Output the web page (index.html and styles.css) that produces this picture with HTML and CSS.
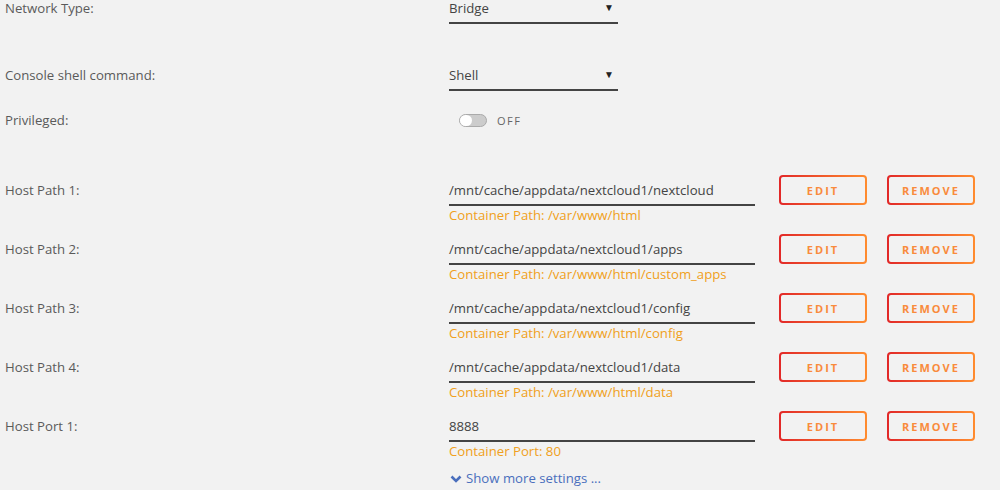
FILE: index.html
```html
<!DOCTYPE html>
<html lang="en">
<head>
    <meta charset="UTF-8">
    <title>Container Settings</title>
    <link rel="stylesheet" href="styles.css">
</head>
<body>

    <div class="settings">
        <div class="row row-network">
            <div class="label">Network Type:</div>
            <div class="field select">Bridge<span class="arrow">&#9660;</span></div>
        </div>

        <div class="row row-shell">
            <div class="label">Console shell command:</div>
            <div class="field select">Shell<span class="arrow">&#9660;</span></div>
        </div>

        <div class="row row-priv">
            <div class="label">Privileged:</div>
            <div class="switch-wrap">
                <span class="switch"><span class="knob"></span></span>
                <span class="switch-text">OFF</span>
            </div>
        </div>

        <div class="row path-row">
            <div class="label">Host Path 1:</div>
            <div class="value">
                <div class="field input">/mnt/cache/appdata/nextcloud1/nextcloud</div>
                <div class="hint">Container Path: /var/www/html</div>
            </div>
            <button class="btn btn-edit">EDIT</button>
            <button class="btn">REMOVE</button>
        </div>

        <div class="row path-row">
            <div class="label">Host Path 2:</div>
            <div class="value">
                <div class="field input">/mnt/cache/appdata/nextcloud1/apps</div>
                <div class="hint">Container Path: /var/www/html/custom_apps</div>
            </div>
            <button class="btn btn-edit">EDIT</button>
            <button class="btn">REMOVE</button>
        </div>

        <div class="row path-row">
            <div class="label">Host Path 3:</div>
            <div class="value">
                <div class="field input">/mnt/cache/appdata/nextcloud1/config</div>
                <div class="hint">Container Path: /var/www/html/config</div>
            </div>
            <button class="btn btn-edit">EDIT</button>
            <button class="btn">REMOVE</button>
        </div>

        <div class="row path-row">
            <div class="label">Host Path 4:</div>
            <div class="value">
                <div class="field input">/mnt/cache/appdata/nextcloud1/data</div>
                <div class="hint">Container Path: /var/www/html/data</div>
            </div>
            <button class="btn btn-edit">EDIT</button>
            <button class="btn">REMOVE</button>
        </div>

        <div class="row path-row">
            <div class="label">Host Port 1:</div>
            <div class="value">
                <div class="field input">8888</div>
                <div class="hint">Container Port: 80</div>
            </div>
            <button class="btn btn-edit">EDIT</button>
            <button class="btn">REMOVE</button>
        </div>

        <div class="row more-row">
            <div class="label"></div>
            <a class="more" href="#">
                <svg width="12" height="10" viewBox="0 0 12 10"><polyline points="1.5,2.5 6,7 10.5,2.5" fill="none" stroke="#4a6fbd" stroke-width="2.6"/></svg>
                Show more settings ...
            </a>
        </div>
    </div>

</body>
</html>
```

FILE: styles.css
```css
body {
    margin: 0;
    background: #f2f2f2;
    font-family: "Open Sans", Arial, sans-serif;
    font-size: 13.2px;
    color: #5a5a5a;
    overflow: hidden;
}
.settings {
    padding-left: 5px;
    margin-top: -7px;
}
.row {
    display: flex;
    align-items: flex-start;
}
.label {
    width: 444px;
    flex: none;
    line-height: 29px;
    padding-top: 1px;
}
.field {
    height: 28px;
    line-height: 29px;
    padding-top: 1px;
    border-bottom: 2px solid #444;
    color: #444;
    box-sizing: content-box;
}
.select {
    width: 169px;
    position: relative;
}
.arrow {
    position: absolute;
    right: 4px;
    top: 0;
    font-size: 10px;
    color: #222;
}
.row-network {
    height: 67px;
}
.row-shell {
    height: 45px;
}
.row-priv {
    height: 70px;
}
.switch-wrap {
    display: flex;
    align-items: center;
    height: 30px;
    padding-left: 10px;
}
.switch {
    width: 26px;
    height: 11px;
    border: 1px solid #aaa;
    border-radius: 7px;
    background: #ccc;
    position: relative;
}
.knob {
    position: absolute;
    left: 0;
    top: 0;
    width: 12px;
    height: 11px;
    border-radius: 6px;
    background: #fff;
}
.switch-text {
    margin-left: 10px;
    font-size: 11px;
    letter-spacing: 1.5px;
    color: #666;
}
.path-row {
    height: 59px;
}
.value {
    width: 306px;
}
.hint {
    line-height: 18px;
    color: #f0a020;
}
.btn {
    width: 88px;
    height: 30px;
    margin-left: 20px;
    border: 2px solid transparent;
    border-radius: 4px;
    background: linear-gradient(#f2f2f2, #f2f2f2) padding-box,
                linear-gradient(90deg, #e22828, #ff8c2f) border-box;
    color: #f98b3c;
    font-family: "Open Sans", Arial, sans-serif;
    font-size: 11px;
    font-weight: bold;
    letter-spacing: 2px;
    cursor: pointer;
}
.btn-edit {
    margin-left: 24px;
}
.more-row {
    padding-top: 0;
}
.more {
    color: #4a6fbd;
    text-decoration: none;
    line-height: 17px;
    display: flex;
    align-items: center;
    gap: 4px;
    padding-left: 1px;
}
```
